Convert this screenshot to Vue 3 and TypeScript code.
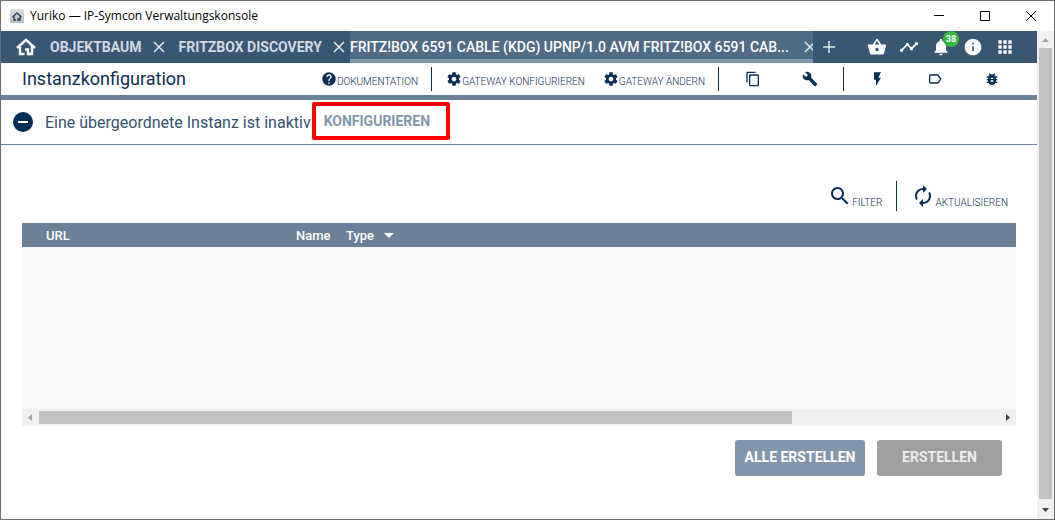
<script setup lang="ts">
interface Tab {
  label: string
  active: boolean
}

interface Action {
  label: string
  icon: string
}

const icons: Record<string, string> = {
  basket:
    'M17.21 9l-4.38-6.56c-.19-.28-.51-.42-.83-.42-.32 0-.64.14-.83.43L6.79 9H2c-.55 0-1 .45-1 1 0 .09.01.18.04.27l2.54 9.27c.23.84 1 1.46 1.92 1.46h13c.92 0 1.69-.62 1.93-1.46l2.54-9.27L23 10c0-.55-.45-1-1-1h-4.79zM9 9l3-4.4L15 9H9zm3 8c-1.1 0-2-.9-2-2s.9-2 2-2 2 .9 2 2-.9 2-2 2z',
  timeline:
    'M23 8c0 1.1-.9 2-2 2-.18 0-.35-.02-.51-.07l-3.56 3.55c.05.16.07.34.07.52 0 1.1-.9 2-2 2s-2-.9-2-2c0-.18.02-.36.07-.52l-2.55-2.55c-.16.05-.34.07-.52.07s-.36-.02-.52-.07l-4.55 4.56c.05.16.07.33.07.51 0 1.1-.9 2-2 2s-2-.9-2-2 .9-2 2-2c.18 0 .35.02.51.07l4.56-4.55C8.02 9.36 8 9.18 8 9c0-1.1.9-2 2-2s2 .9 2 2c0 .18-.02.36-.07.52l2.55 2.55c.16-.05.34-.07.52-.07s.36.02.52.07l3.55-3.56C19.02 8.35 19 8.18 19 8c0-1.1.9-2 2-2s2 .9 2 2z',
  bell:
    'M12 22c1.1 0 2-.9 2-2h-4c0 1.1.89 2 2 2zm6-6v-5c0-3.07-1.64-5.64-4.5-6.32V4c0-.83-.67-1.5-1.5-1.5s-1.5.67-1.5 1.5v.68C7.63 5.36 6 7.92 6 11v5l-2 2v1h16v-1l-2-2z',
  info: 'M12 2C6.48 2 2 6.48 2 12s4.48 10 10 10 10-4.48 10-10S17.52 2 12 2zm1 15h-2v-6h2v6zm0-8h-2V7h2v2z',
  apps: 'M4 8h4V4H4v4zm6 12h4v-4h-4v4zm-6 0h4v-4H4v4zm0-6h4v-4H4v4zm6 0h4v-4h-4v4zm6-10v4h4V4h-4zm-6 4h4V4h-4v4zm6 6h4v-4h-4v4zm0 6h4v-4h-4v4z',
  help: 'M12 2C6.48 2 2 6.48 2 12s4.48 10 10 10 10-4.48 10-10S17.52 2 12 2zm1 17h-2v-2h2v2zm2.07-7.75l-.9.92C13.45 12.9 13 13.5 13 15h-2v-.5c0-1.1.45-2.1 1.17-2.83l1.24-1.26c.37-.36.59-.86.59-1.41 0-1.1-.9-2-2-2s-2 .9-2 2H8c0-2.21 1.79-4 4-4s4 1.79 4 4c0 .88-.36 1.68-.93 2.25z',
  gear: 'M19.43 12.98c.04-.32.07-.64.07-.98s-.03-.66-.07-.98l2.11-1.65c.19-.15.24-.42.12-.64l-2-3.46c-.12-.22-.39-.3-.61-.22l-2.49 1c-.52-.4-1.08-.73-1.69-.98l-.38-2.65C14.46 2.18 14.25 2 14 2h-4c-.25 0-.46.18-.49.42l-.38 2.65c-.61.25-1.17.59-1.69.98l-2.49-1c-.23-.09-.49 0-.61.22l-2 3.46c-.13.22-.07.49.12.64l2.11 1.65c-.04.32-.07.65-.07.98s.03.66.07.98l-2.11 1.65c-.19.15-.24.42-.12.64l2 3.46c.12.22.39.3.61.22l2.49-1c.52.4 1.08.73 1.69.98l.38 2.65c.03.24.24.42.49.42h4c.25 0 .46-.18.49-.42l.38-2.65c.61-.25 1.17-.59 1.69-.98l2.49 1c.23.09.49 0 .61-.22l2-3.46c.12-.22.07-.49-.12-.64l-2.11-1.65zM12 15.5c-1.93 0-3.5-1.57-3.5-3.5s1.57-3.5 3.5-3.5 3.5 1.57 3.5 3.5-1.57 3.5-3.5 3.5z',
  copy: 'M16 1H4c-1.1 0-2 .9-2 2v14h2V3h12V1zm3 4H8c-1.1 0-2 .9-2 2v14c0 1.1.9 2 2 2h11c1.1 0 2-.9 2-2V7c0-1.1-.9-2-2-2zm0 16H8V7h11v14z',
  wrench:
    'M22.7 19l-9.1-9.1c.9-2.3.4-5-1.5-6.9-2-2-5-2.4-7.4-1.3L9 6 6 9 1.6 4.7C.4 7.1.9 10.1 2.9 12.1c1.9 1.9 4.6 2.4 6.9 1.5l9.1 9.1c.4.4 1 .4 1.4 0l2.3-2.3c.5-.4.5-1.1.1-1.4z',
  flash: 'M6 2v11h3v9l7.500-12H12.500l4-8z',
  label:
    'M17.630 5.840C17.270 5.330 16.670 5 16 5L5 5.010C3.900 5.010 3 5.900 3 7v10c0 1.100.9 1.990 2 1.990L16 19c.67 0 1.270-.33 1.630-.84L22 12l-4.370-6.160zM16 17H5V7h11l3.550 5L16 17z',
  bug: 'M20 8h-2.810c-.45-.78-1.070-1.450-1.820-1.960L17 4.410 15.590 3l-2.170 2.170C12.960 5.060 12.490 5 12 5c-.49 0-.96.06-1.410.17L8.410 3 7 4.410l1.620 1.630C7.880 6.550 7.260 7.220 6.810 8H4v2h2.090c-.05.33-.09.66-.09 1v1H4v2h2v1c0 .34.04.67.09 1H4v2h2.810c1.040 1.790 2.970 3 5.190 3s4.150-1.210 5.190-3H20v-2h-2.090c.05-.33.09-.66.09-1v-1h2v-2h-2v-1c0-.34-.04-.67-.09-1H20V8zm-6 8h-4v-2h4v2zm0-4h-4v-2h4v2z',
  search:
    'M15.500 14h-.79l-.28-.27C15.410 12.590 16 11.110 16 9.500 16 5.910 13.090 3 9.500 3S3 5.910 3 9.500 5.910 16 9.500 16c1.610 0 3.090-.59 4.230-1.570l.27.28v.79l5 4.990L20.490 19l-4.990-5zm-6 0C7.010 14 5 11.990 5 9.500S7.010 5 9.500 5 14 7.010 14 9.500 11.990 14 9.500 14z',
  refresh:
    'M12 6v3l4-4-4-4v3c-4.420 0-8 3.580-8 8 0 1.570.46 3.030 1.240 4.260L6.700 14.800C6.250 13.970 6 13.010 6 12c0-3.310 2.690-6 6-6zm6.760 1.740L17.300 9.200c.44.84.7 1.790.7 2.800 0 3.310-2.690 6-6 6v-3l-4 4 4 4v-3c4.420 0 8-3.580 8-8 0-1.570-.46-3.030-1.240-4.260z',
}

const tabs: Tab[] = [
  { label: 'OBJEKTBAUM', active: false },
  { label: 'FRITZBOX DISCOVERY', active: false },
  { label: 'FRITZ!BOX 6591 CABLE (KDG) UPNP/1.0 AVM FRITZ!BOX 6591 CAB...', active: true },
]

const gatewayActions: Action[] = [
  { label: 'GATEWAY KONFIGURIEREN', icon: 'gear' },
  { label: 'GATEWAY ÄNDERN', icon: 'gear' },
]

const editActions: Action[] = [
  { label: 'Kopieren', icon: 'copy' },
  { label: 'Werkzeuge', icon: 'wrench' },
]

const objectActions: Action[] = [
  { label: 'Ereignisse', icon: 'flash' },
  { label: 'Beschriftung', icon: 'label' },
  { label: 'Debug', icon: 'bug' },
]
</script>

<template>
  <div class="window">
    <header class="titlebar">
      <span class="app-icon">
        <svg viewBox="0 0 20 18" width="10" height="9" aria-hidden="true">
          <path d="M1 10L10 2l9 8M4 9v7h4M16 9v7h-4v-4" fill="none" stroke="currentColor" stroke-width="3" />
        </svg>
      </span>
      <span class="app-title">Yuriko — IP-Symcon Verwaltungskonsole</span>
      <div class="window-controls">
        <button type="button" aria-label="Minimieren">
          <svg viewBox="0 0 12 12" width="12" height="12"><path d="M1 5.500h10" /></svg>
        </button>
        <button type="button" aria-label="Maximieren">
          <svg viewBox="0 0 12 12" width="12" height="12"><path d="M1.500 1.500h9v9h-9z" /></svg>
        </button>
        <button type="button" aria-label="Schließen">
          <svg viewBox="0 0 12 12" width="12" height="12"><path d="M1 1l10 10M11 1L1 11" /></svg>
        </button>
      </div>
    </header>

    <div class="body">
      <div class="app">
        <nav class="tabbar">
          <button type="button" class="home" aria-label="Start">
            <svg viewBox="0 0 20 18" width="20" height="18">
              <path d="M1 10L10 1.800l9 8.200M4 9v7h4.500M16 8.500V16h-4v-4.500H9" fill="none" stroke="currentColor" stroke-width="2.400" />
            </svg>
          </button>
          <div v-for="tab in tabs" :key="tab.label" class="tab" :class="{ active: tab.active }">
            <button type="button" class="tab-label">{{ tab.label }}</button>
            <button type="button" class="tab-close" aria-label="Tab schließen">
              <svg viewBox="0 0 12 12" width="12" height="12"><path d="M1 1l10 10M11 1L1 11" /></svg>
            </button>
          </div>
          <button type="button" class="tab-add" aria-label="Neuer Tab">
            <svg viewBox="0 0 12 12" width="12" height="12"><path d="M6 0v12M0 6h12" /></svg>
          </button>
          <div class="tools">
            <button type="button" aria-label="Store">
              <svg class="icon" viewBox="0 0 24 24" width="20" height="20"><path :d="icons.basket" /></svg>
            </button>
            <button type="button" aria-label="Verlauf">
              <svg class="icon" viewBox="0 0 24 24" width="20" height="20"><path :d="icons.timeline" /></svg>
            </button>
            <button type="button" aria-label="Meldungen">
              <svg class="icon" viewBox="0 0 24 24" width="20" height="20"><path :d="icons.bell" /></svg>
              <span class="badge">38</span>
            </button>
            <button type="button" aria-label="Information">
              <svg class="icon" viewBox="0 0 24 24" width="20" height="20"><path :d="icons.info" /></svg>
            </button>
            <button type="button" aria-label="Apps">
              <svg class="icon" viewBox="0 0 24 24" width="20" height="20"><path :d="icons.apps" /></svg>
            </button>
          </div>
        </nav>

        <div class="subheader">
          <h1>Instanzkonfiguration</h1>
          <div class="actions">
            <button type="button" class="text-action">
              <svg class="icon" viewBox="0 0 24 24" width="16" height="16"><path :d="icons.help" /></svg>
              <span>DOKUMENTATION</span>
            </button>
            <span class="divider wide"></span>
            <div class="gateway">
              <button v-for="a in gatewayActions" :key="a.label" type="button" class="text-action">
                <svg class="icon" viewBox="0 0 24 24" width="16" height="16"><path :d="icons[a.icon]" /></svg>
                <span>{{ a.label }}</span>
              </button>
            </div>
            <span class="divider after-text"></span>
            <button v-for="a in editActions" :key="a.label" type="button" class="icon-action" :aria-label="a.label">
              <svg class="icon" viewBox="0 0 24 24" width="16" height="16"><path :d="icons[a.icon]" /></svg>
            </button>
            <span class="divider"></span>
            <button v-for="a in objectActions" :key="a.label" type="button" class="icon-action" :aria-label="a.label">
              <svg class="icon" viewBox="0 0 24 24" width="16" height="16"><path :d="icons[a.icon]" /></svg>
            </button>
          </div>
        </div>

        <div class="notice" role="status">
          <svg class="notice-icon" viewBox="0 0 20 20" width="20" height="20" aria-hidden="true">
            <circle cx="10" cy="10" r="10" />
            <path d="M5 10h10" stroke="#fff" stroke-width="2" />
          </svg>
          <span class="notice-text">Eine übergeordnete Instanz ist inaktiv</span>
          <button type="button" class="configure">KONFIGURIEREN</button>
        </div>

        <main class="content">
          <div class="list-tools">
            <button type="button">
              <svg class="icon" viewBox="0 0 24 24" width="24" height="24"><path :d="icons.search" /></svg>
              <span>FILTER</span>
            </button>
            <span class="divider tall"></span>
            <button type="button">
              <svg class="icon" viewBox="0 0 24 24" width="24" height="24"><path :d="icons.refresh" /></svg>
              <span>AKTUALISIEREN</span>
            </button>
          </div>

          <div class="list">
            <table>
              <thead>
                <tr>
                  <th class="col-url" scope="col">URL</th>
                  <th class="col-name" scope="col">Name</th>
                  <th scope="col">
                    Type
                    <svg class="sort" viewBox="0 0 10 5" width="10" height="5" aria-hidden="true"><path d="M0 0h10L5 5z" /></svg>
                  </th>
                </tr>
              </thead>
            </table>
            <div class="list-body"></div>
            <div class="hscroll" aria-hidden="true">
              <svg viewBox="0 0 17 17" width="17" height="17"><path d="M10 5v7L6 8.500z" fill="#a3a3a3" /></svg>
              <div class="htrack"><div class="hthumb"></div></div>
              <svg viewBox="0 0 17 17" width="17" height="17"><path d="M7 5v7l4-3.500z" fill="#404040" /></svg>
            </div>
          </div>

          <div class="footer">
            <button type="button" class="create-all">ALLE ERSTELLEN</button>
            <button type="button" class="create">ERSTELLEN</button>
          </div>
        </main>
      </div>

      <div class="vscroll" aria-hidden="true">
        <svg viewBox="0 0 17 17" width="17" height="17"><path d="M5 11h7L8.500 7z" fill="#a3a3a3" /></svg>
        <div class="vthumb"></div>
        <svg viewBox="0 0 17 20" width="17" height="20"><path d="M5 9h7l-3.500 4z" fill="#404040" /></svg>
      </div>
    </div>
  </div>
</template>

<style>
body {
  margin: 0;
}
</style>

<style scoped>
.window {
  box-sizing: border-box;
  min-height: 100vh;
  display: flex;
  flex-direction: column;
  border: 1px solid #6e6e6e;
  background: #fff;
  color: #0b2f54;
  font-family: Roboto, "Liberation Sans", sans-serif;
}

button {
  margin: 0;
  padding: 0;
  border: 0;
  background: none;
  color: inherit;
  font: inherit;
  white-space: nowrap;
}

svg {
  display: block;
  flex: none;
}

.icon {
  fill: currentColor;
}

.titlebar {
  display: flex;
  align-items: center;
  height: 30px;
  padding-left: 9px;
  color: #000;
}

.app-icon {
  display: grid;
  place-items: center;
  width: 14px;
  height: 14px;
  margin-right: 6px;
  background: linear-gradient(#dedede, #bdbdbd);
  border-radius: 1px;
  color: #24455f;
}

.app-title {
  font: 12px/16px "Open Sans", "Noto Sans", sans-serif;
}

.window-controls {
  display: flex;
  margin-left: auto;
}

.window-controls button {
  display: grid;
  place-items: center;
  width: 46px;
  height: 30px;
}

.window-controls path {
  fill: none;
  stroke: #000;
}

.body {
  flex: 1;
  display: flex;
}

.app {
  flex: 1;
  min-width: 0;
  display: flex;
  flex-direction: column;
}

.tabbar {
  display: flex;
  align-items: center;
  height: 32px;
  padding-right: 16px;
  background: #395673;
  color: #fff;
}

.home {
  padding: 0 14px 0 15px;
}

.tab {
  display: flex;
  align-items: center;
  flex: none;
  box-sizing: border-box;
  height: 32px;
  color: #d2dae1;
  font-size: 14px;
  font-weight: 700;
}

.tab-label {
  overflow: hidden;
  text-overflow: ellipsis;
}

.tab-close {
  padding: 0 14px 0 11px;
}

.tab:has(+ .active) .tab-close {
  padding-right: 5px;
}

.tab-close path,
.tab-add path {
  fill: none;
  stroke: #e4e9ed;
  stroke-width: 1.500;
}

.tab.active {
  flex: 0 1 463px;
  min-width: 0;
  overflow: hidden;
  background: #4f6b85;
  border-bottom: 4px solid #8397ab;
  border-top: 4px solid #4f6b85;
  color: #fff;
  font-weight: 500;
}

.tab.active .tab-label {
  flex: 1;
  min-width: 0;
  text-align: left;
}

.tab.active .tab-close {
  flex: none;
  display: flex;
  width: 17px;
  padding: 0 0 0 8px;
}

.tab-add {
  padding: 0 10px;
}

.tools {
  display: flex;
  margin-left: auto;
}

.tools button {
  position: relative;
  display: grid;
  place-items: center;
  width: 32px;
  height: 32px;
}

.badge {
  position: absolute;
  top: 0;
  right: -2px;
  width: 16px;
  height: 16px;
  border-radius: 8px;
  background: #35b83e;
  font-size: 9px;
  font-weight: 700;
  line-height: 16px;
  text-align: center;
}

.subheader {
  display: flex;
  align-items: center;
  height: 32px;
  padding: 0 17px 0 21px;
  border-bottom: 5px solid #6a8198;
}

h1 {
  margin: 0;
  font-size: 18px;
  font-weight: 400;
  line-height: 24px;
}

.actions {
  display: flex;
  align-items: center;
  margin-left: auto;
}

.divider {
  width: 1px;
  height: 24px;
  margin: 0 5px;
  background: #0b2f54;
}

.divider.wide {
  margin: 0 14px 0 13px;
}

.divider.after-text {
  margin-left: 13px;
}

.gateway {
  display: flex;
  gap: 18px;
}

.text-action {
  display: flex;
  align-items: center;
  font-size: 10px;
  font-weight: 300;
  line-height: 12px;
}

.text-action span {
  padding-top: 5px;
}

.icon-action {
  display: grid;
  place-items: center;
  width: 57px;
  height: 32px;
}

.notice {
  display: flex;
  align-items: center;
  height: 44px;
  padding-left: 12px;
  border-bottom: 1px solid #6a8198;
}

.notice-icon {
  fill: #002d54;
}

.notice-text {
  margin: 0 1px 0 12px;
  padding-top: 2px;
  color: #34516f;
  font-size: 16px;
  line-height: 20px;
}

.configure {
  margin-bottom: 2px;
  padding: 0 16px 0 8px;
  border: 4px solid #fe0000;
  border-radius: 2px;
  color: #8296ab;
  font-size: 14px;
  font-weight: 700;
  line-height: 30px;
}

.content {
  flex: 1;
  display: flex;
  flex-direction: column;
  padding: 36px 21px 43px;
}

.list-tools {
  display: flex;
  align-items: center;
  justify-content: flex-end;
  padding-right: 8px;
  margin-bottom: 12px;
  font-size: 10px;
  font-weight: 300;
  line-height: 12px;
}

.list-tools button {
  display: flex;
  align-items: center;
}

.list-tools button span {
  padding-top: 13px;
}

.divider.tall {
  height: 30px;
  margin: 0 14px;
}

.list {
  flex: 1;
  display: flex;
  flex-direction: column;
}

table {
  width: 100%;
  border-collapse: collapse;
  table-layout: fixed;
  background: #6a8198;
  color: #fff;
  font-size: 13px;
}

th {
  height: 24px;
  padding: 0;
  font-weight: 500;
  text-align: left;
}

.col-url {
  width: 250px;
  padding-left: 24px;
}

.col-name {
  width: 50px;
}

.sort {
  display: inline-block;
  margin: 0 0 2px 7px;
  fill: #fff;
}

.list-body {
  flex: 1;
  background: #f7f7f7;
}

.hscroll {
  display: flex;
  height: 17px;
  background: #f0f0f0;
}

.htrack {
  flex: 1;
  padding: 2px 0;
}

.hthumb {
  width: 78.4%;
  height: 13px;
  background: #c1c1c1;
}

.footer {
  display: flex;
  justify-content: flex-end;
  gap: 12px;
  padding: 14px 14px 0 0;
}

.footer button {
  min-width: 125px;
  height: 36px;
  padding: 0 8px 2px;
  border-radius: 3px;
  color: #fff;
  font-size: 14px;
  font-weight: 700;
}

.footer .create-all {
  min-width: 130px;
  background: #8296ab;
}

.footer .create {
  background: #9f9f9f;
  color: #ececec;
}

.vscroll {
  display: flex;
  flex-direction: column;
  width: 17px;
  background: #f1f1f1;
}

.vthumb {
  flex: 1;
  margin: 0 2px;
  background: #c1c1c1;
}
</style>
